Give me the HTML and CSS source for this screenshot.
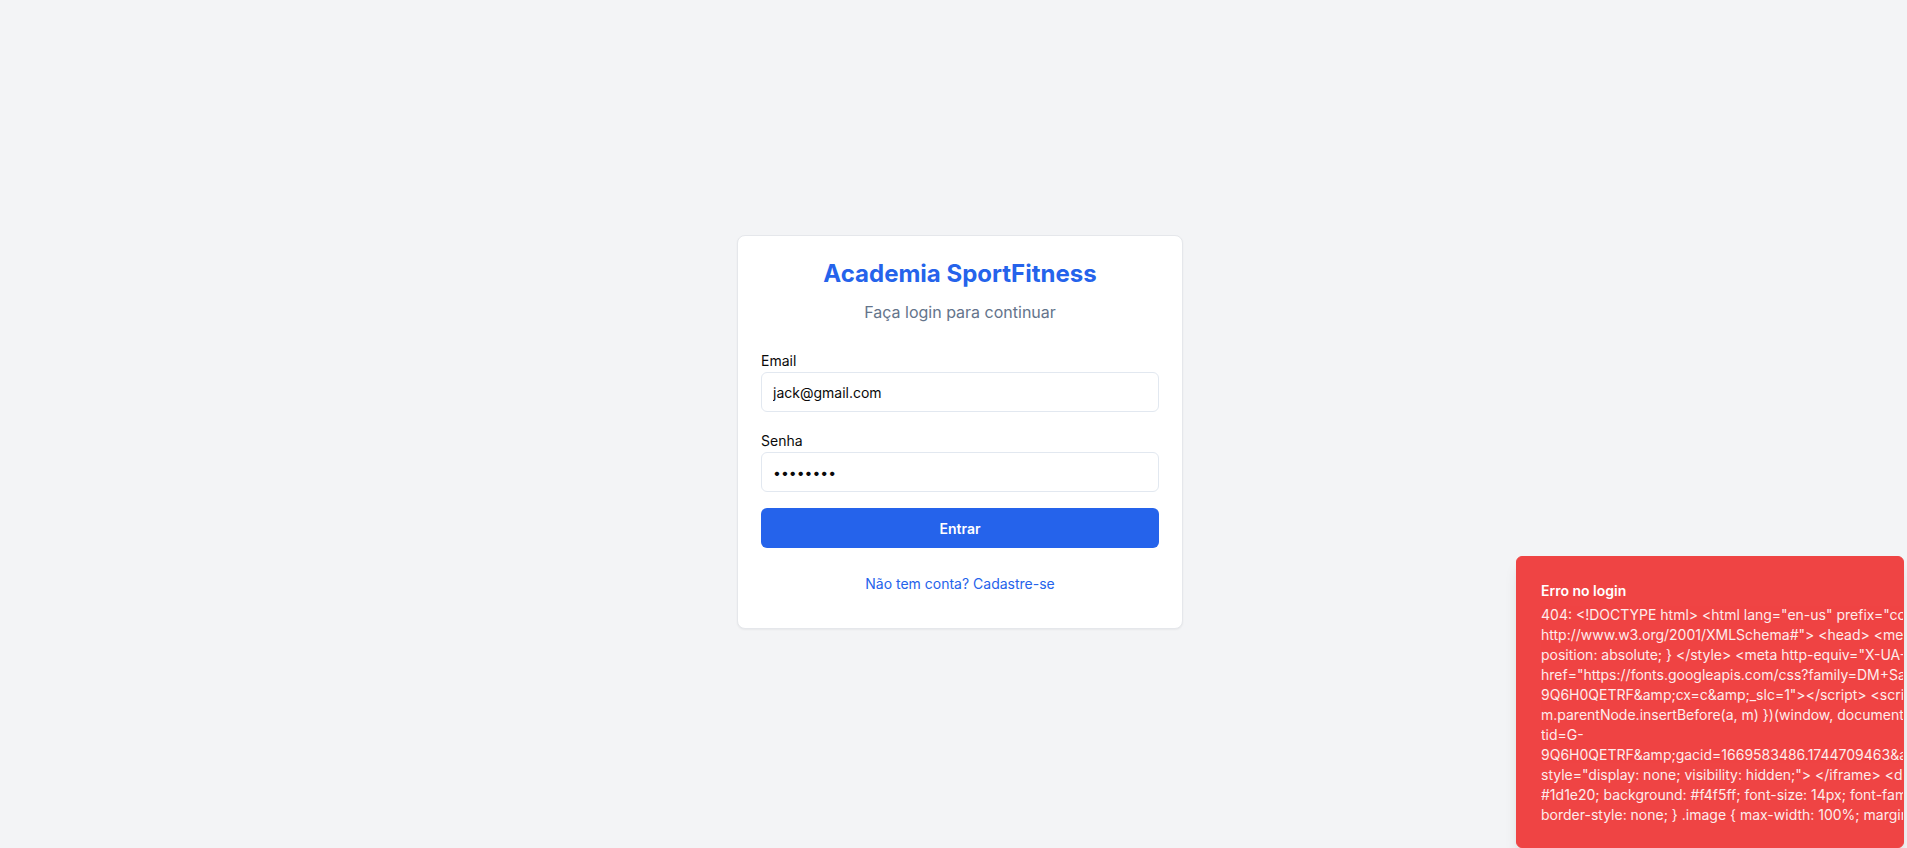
FILE: index.html
```html
<!DOCTYPE html>
<html lang="pt-BR">
<head>
<meta charset="utf-8">
<title>Academia SportFitness - Login</title>
<link rel="stylesheet" href="styles.css">
</head>
<body>
<div class="page">
  <main class="card">
    <header class="card-header">
      <h1 class="title">Academia SportFitness</h1>
      <p class="subtitle">Faça login para continuar</p>
    </header>
    <form class="form">
      <div class="field">
        <label class="label" for="email">Email</label>
        <input class="input" id="email" type="email" value="jack@gmail.com">
      </div>
      <div class="field">
        <label class="label" for="senha">Senha</label>
        <input class="input" id="senha" type="password" value="12345678">
      </div>
      <button class="button" type="button">Entrar</button>
    </form>
    <div class="footer">
      <a class="link" href="#">Não tem conta? Cadastre-se</a>
    </div>
  </main>

  <div class="toast" role="alert">
    <div class="toast-title">Erro no login</div>
    <div class="toast-desc">
      <div class="line">404: &lt;!DOCTYPE html&gt; &lt;html lang="en-us" prefix="content: http://purl.org/rss/1.0/modules/content/ dc: http://purl.org/dc/terms/</div>
      <div class="line">http://www.w3.org/2001/XMLSchema#"&gt; &lt;head&gt; &lt;meta charset="utf-8" /&gt; &lt;style&gt; .lightbox {</div>
      <div class="line">position: absolute; } &lt;/style&gt; &lt;meta http-equiv="X-UA-Compatible" content="IE=edge"&gt;</div>
      <div class="line">href="https://fonts.googleapis.com/css?family=DM+Sans:400,500,700&amp;display=swap"</div>
      <div class="line">9Q6H0QETRF&amp;amp;cx=c&amp;amp;_slc=1"&gt;&lt;/script&gt; &lt;script&gt; (function (w, d, s) {</div>
      <div class="line">m.parentNode.insertBefore(a, m) })(window, document, 'script');</div>
      <div class="line">tid=G-</div>
      <div class="line">9Q6H0QETRF&amp;amp;gacid=1669583486.1744709463&amp;amp;gtm=45je54a0</div>
      <div class="line">style="display: none; visibility: hidden;"&gt; &lt;/iframe&gt; &lt;div class="content"&gt;</div>
      <div class="line">#1d1e20; background: #f4f5ff; font-size: 14px; font-family: 'DM Sans', sans-serif;</div>
      <div class="line">border-style: none; } .image { max-width: 100%; margin: 0 auto; }</div>
    </div>
  </div>
</div>
</body>
</html>
```
FILE: styles.css
```css
html, body {
  margin: 0;
  padding: 0;
  overflow: hidden;
  background: #f3f4f6;
}

body {
  font-family: Inter, "Noto Sans", "Liberation Sans", sans-serif;
  color: #0a0a0a;
}

.page {
  position: relative;
  width: 1920px;
  height: 864px;
  display: flex;
  align-items: center;
  justify-content: center;
  background: #f3f4f6;
}

.card {
  width: 446px;
  box-sizing: border-box;
  background: #ffffff;
  border: 1px solid #e5e7eb;
  border-radius: 8px;
  box-shadow: 0 1px 2px rgba(0, 0, 0, 0.05);
  padding: 22px 23px 34px;
  display: flex;
  flex-direction: column;
}

.card-header {
  display: flex;
  flex-direction: column;
  align-items: center;
}

.title {
  margin: 0;
  font-size: 24px;
  line-height: 32px;
  font-weight: 700;
  color: #2563eb;
}

.subtitle {
  margin: 10px 0 0;
  font-size: 16px;
  line-height: 24px;
  color: #64748b;
}

.form {
  margin-top: 30px;
  display: flex;
  flex-direction: column;
}

.field {
  display: flex;
  flex-direction: column;
  gap: 4px;
}

.field + .field {
  margin-top: 22px;
}

.label {
  font-size: 14px;
  line-height: 14px;
  font-weight: 400;
  color: #0a0a0a;
}

.input {
  box-sizing: border-box;
  height: 40px;
  width: 100%;
  border: 1px solid #e2e8f0;
  border-radius: 6px;
  background: #ffffff;
  padding: 0 11px;
  font-family: inherit;
  font-size: 14px;
  color: #0a0a0a;
  outline: none;
}

.button {
  margin-top: 16px;
  height: 40px;
  width: 100%;
  border: none;
  border-radius: 6px;
  background: #2563eb;
  color: #ffffff;
  font-family: inherit;
  font-size: 14px;
  font-weight: 600;
  cursor: pointer;
}

.footer {
  margin-top: 26px;
  display: flex;
  justify-content: center;
}

.link {
  font-size: 14px;
  line-height: 20px;
  color: #2563eb;
  text-decoration: none;
}

.toast {
  position: absolute;
  right: 16px;
  bottom: 16px;
  width: 388px;
  box-sizing: border-box;
  background: #ef4444;
  border: 1px solid #ef4444;
  border-radius: 6px;
  box-shadow: 0 10px 15px -3px rgba(0, 0, 0, 0.1), 0 4px 6px -4px rgba(0, 0, 0, 0.1);
  padding: 24px 32px 22px 24px;
  overflow: hidden;
  color: #ffffff;
  display: flex;
  flex-direction: column;
  gap: 4px;
}

.toast-title {
  font-size: 14px;
  line-height: 20px;
  font-weight: 600;
}

.toast-desc {
  font-size: 14px;
  line-height: 20px;
  opacity: 0.9;
}

.line {
  white-space: nowrap;
}
```
